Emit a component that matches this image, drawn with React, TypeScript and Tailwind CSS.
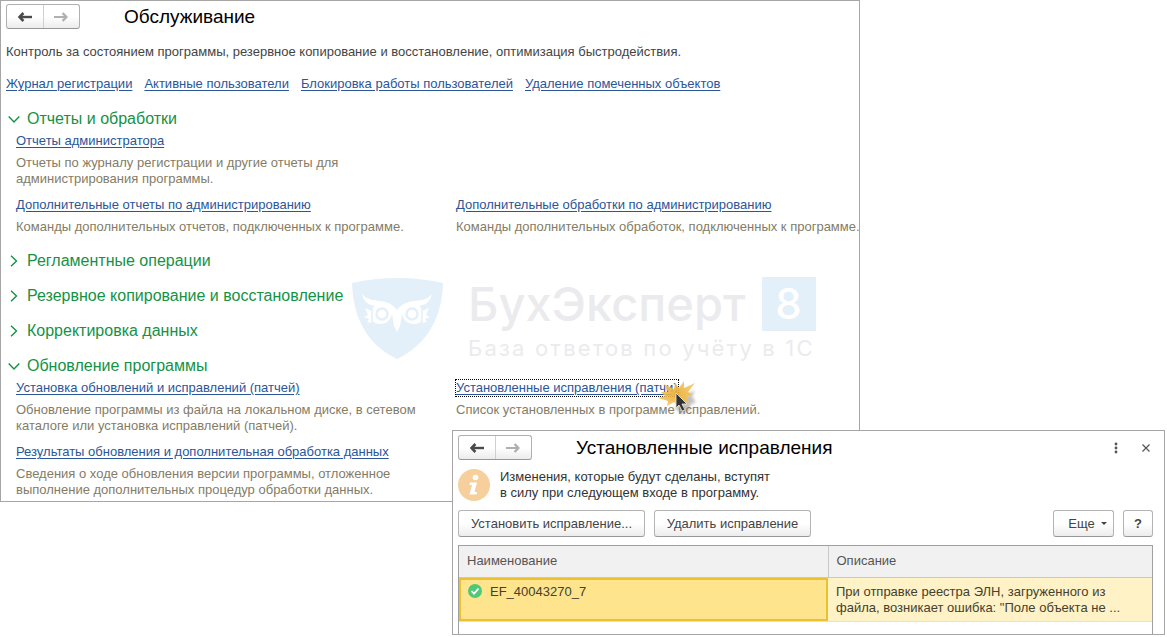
import { ReactNode, useState } from "react";

interface LinkItem {
  title: string;
  text: string;
  focused?: boolean;
}

interface Section {
  title: string;
  items: (LinkItem | null)[];
}

const topLinks = [
  "Журнал регистрации",
  "Активные пользователи",
  "Блокировка работы пользователей",
  "Удаление помеченных объектов",
];

// null - пустая ячейка сетки
const sections: Section[] = [
  {
    title: "Отчеты и обработки",
    items: [
      {
        title: "Отчеты администратора",
        text: "Отчеты по журналу регистрации и другие отчеты для\nадминистрирования программы.",
      },
      null,
      {
        title: "Дополнительные отчеты по администрированию",
        text: "Команды дополнительных отчетов, подключенных к программе.",
      },
      {
        title: "Дополнительные обработки по администрированию",
        text: "Команды дополнительных обработок, подключенных к программе.",
      },
    ],
  },
  { title: "Регламентные операции", items: [] },
  { title: "Резервное копирование и восстановление", items: [] },
  { title: "Корректировка данных", items: [] },
  {
    title: "Обновление программы",
    items: [
      {
        title: "Установка обновлений и исправлений (патчей)",
        text: "Обновление программы из файла на локальном диске, в сетевом\nкаталоге или установка исправлений (патчей).",
      },
      {
        title: "Установленные исправления (патчи)",
        text: "Список установленных в программе исправлений.",
        focused: true,
      },
      {
        title: "Результаты обновления и дополнительная обработка данных",
        text: "Сведения о ходе обновления версии программы, отложенное\nвыполнение дополнительных процедур обработки данных.",
      },
    ],
  },
];

function NavButtons() {
  return (
    <div className="flex h-[25px] w-[74px] shrink-0 rounded-[3px] border border-[#b0b0b0] border-b-[#989898] bg-linear-to-b from-white from-50% to-[#ececec]">
      <button
        type="button"
        aria-label="Назад"
        className="flex flex-1 items-center justify-center border-r border-[#d0d0d0]"
      >
        <svg width="14" height="10" viewBox="0 0 14 10" fill="none" stroke="#4a4a4a">
          <path d="M2 5h12" strokeWidth="2.4" />
          <path d="M5.4 1 1.6 5l3.800 4" strokeWidth="2.6" />
        </svg>
      </button>
      <button
        type="button"
        aria-label="Вперед"
        className="flex flex-1 items-center justify-center"
      >
        <svg width="14" height="10" viewBox="0 0 14 10" fill="none" stroke="#b0b0b0">
          <path d="M0 5h12" strokeWidth="2" />
          <path d="m8.6 1 3.800 4-3.800 4" strokeWidth="2.4" />
        </svg>
      </button>
    </div>
  );
}

function PushButton({
  children,
  className,
}: {
  children: ReactNode;
  className: string;
}) {
  return (
    <button
      type="button"
      className={`flex h-[27px] items-center justify-center rounded-[3px] border border-[#b4b4b4] border-b-[#989898] bg-linear-to-b from-white from-50% to-[#ececec] text-[#444] ${className}`}
    >
      {children}
    </button>
  );
}

function ClickMark() {
  return (
    <svg
      className="pointer-events-none absolute -top-[2px] -right-7 z-10"
      width="52"
      height="44"
      viewBox="0 0 52 44"
    >
      <defs>
        <radialGradient id="burst" cx="50%" cy="50%" r="50%">
          <stop offset="0" stopColor="#e9a92c" />
          <stop offset="1" stopColor="#f3c766" />
        </radialGradient>
        <filter id="soft" x="-30%" y="-30%" width="160%" height="160%">
          <feGaussianBlur stdDeviation="1.6" />
        </filter>
      </defs>
      <path
        d="M20 30 36 15l5-3-3 7 4 5-6 3 0 5-7 4Z"
        fill="#777"
        opacity="0.45"
        filter="url(#soft)"
      />
      <path
        d="M10 6l10 5 1-6 4 5 5-7 0 7 11-5-7 9 5 2-6 3 2 6-7-2-3 6-5-5-7 4 1-5-10-3 7-2-4-4 7 0Z"
        fill="url(#burst)"
        opacity="0.9"
      />
      <path
        d="M22 15v15l3-3 3 6 3-1-3-6h5Z"
        fill="#2e3338"
        stroke="#f6ecd4"
        strokeWidth="0.8"
      />
    </svg>
  );
}

function Watermark() {
  return (
    <div
      aria-hidden="true"
      className="pointer-events-none absolute top-[276px] left-[349px] flex font-[Inter,'Open_Sans',sans-serif] text-[#ebebee]"
    >
      <svg width="94" height="84" viewBox="0 0 94 84" className="shrink-0">
        <path
          d="M2 6Q47-4 93 6C92 42 76 68 47 82 18 68 3 42 2 6Z"
          fill="#e3f0f9"
        />
        <g fill="#fff">
          <path d="M12 17c5 6 11 6 18 7 9 1 13 4 17 9 4-5 8-8 17-9 7-1 13-1 18-7-2 8-6 11-13 12 3 2 5 5 5 8 0 6-4 10-10 10-7 0-11-5-12-10l-2 12-3 6-3-6-2-12c-1 5-5 10-12 10-6 0-10-4-10-10 0-3 2-6 5-8-7-1-11-4-13-12Z" />
          <path d="M15 31l7 3v12l-5-1 2-3-5-2 4-2Z" />
          <path d="M79 31l-7 3v12l5-1-2-3 5-2-4-2Z" />
        </g>
        <g fill="none" stroke="#e3f0f9" strokeWidth="2.400">
          <circle cx="32" cy="37" r="5.500" />
          <circle cx="62" cy="37" r="5.500" />
          <path d="M22 46V29M72 46V29" strokeWidth="1.500" />
        </g>
      </svg>
      <div className="ml-6">
        <div className="flex items-center gap-4">
          <span className="text-[47px] leading-[54px] font-medium">БухЭксперт</span>
          <span className="flex h-[54px] w-[54px] items-center justify-center bg-[#e3f0f9] text-[42px] leading-none font-medium text-white">
            8
          </span>
        </div>
        <div className="mt-[5px] text-[22px] leading-6 tracking-widest">
          База ответов по учёту в 1С
        </div>
      </div>
    </div>
  );
}

function SectionBlock({ section }: { section: Section }) {
  const [isOpen, setIsOpen] = useState(section.items.length > 0);

  return (
    <section>
      <button
        type="button"
        aria-expanded={isOpen}
        onClick={() => setIsOpen(!isOpen)}
        className="flex h-5 items-center gap-[7px] text-[16px] leading-5 text-[#149245]"
      >
        <svg width="12" height="12" viewBox="0 0 12 12" fill="none" stroke="#149245" strokeWidth="1.4">
          {isOpen ? <path d="m0.700 3.500 5.300 5.500 5.300-5.500" /> : <path d="m3 0.700 5.500 5.300-5.500 5.300" />}
        </svg>
        {section.title}
      </button>

      {isOpen && section.items.length > 0 && (
        <div className="mt-1 grid grid-cols-[440px_1fr] gap-y-[10px] pb-px pl-2">
          {section.items.map((item, index) =>
            item ? (
              <div key={item.title} className="whitespace-pre">
                <div className="relative w-fit">
                  <a
                    href="#"
                    className={`block text-[#2a5699] underline underline-offset-2 ${
                      item.focused ? "outline-1 outline-dotted outline-black" : ""
                    }`}
                  >
                    {item.title}
                  </a>
                  {item.focused && <ClickMark />}
                </div>
                <p className="mt-[6px] text-[#847c66]">{item.text}</p>
              </div>
            ) : (
              <div key={index} />
            ),
          )}
        </div>
      )}
    </section>
  );
}

function MaintenanceWindow() {
  return (
    <main className="relative w-[73.7%] border border-[#a6a6a6] bg-white pb-[2px]">
      <Watermark />
      <div className="relative px-[5px] pt-[3px]">
        <header className="flex items-center gap-11">
          <NavButtons />
          <h1 className="text-[19px] leading-6 text-black">Обслуживание</h1>
        </header>
        <p className="mt-[15px] text-[#444]">
          Контроль за состоянием программы, резервное копирование и
          восстановление, оптимизация быстродействия.
        </p>
        <nav className="mt-4 flex gap-3">
          {topLinks.map((link) => (
            <a key={link} href="#" className="text-[#2a5699] underline underline-offset-2">
              {link}
            </a>
          ))}
        </nav>
        <div className="mt-[17px] flex flex-col gap-[15px] pl-[2px]">
          {sections.map((section) => (
            <SectionBlock key={section.title} section={section} />
          ))}
        </div>
      </div>
    </main>
  );
}

function PatchesWindow() {
  return (
    <section className="absolute top-[430px] right-[2px] left-[452px] border border-[#a6a6a6] bg-white px-[5px] pt-1">
      <header className="flex items-center gap-11">
        <NavButtons />
        <h2 className="flex-1 text-[19px] leading-6 text-black">
          Установленные исправления
        </h2>
        <div className="flex items-center gap-[14px] pr-[5px]">
          <button type="button" aria-label="Меню" className="flex h-4 w-4 items-center justify-center">
            <svg width="4" height="12" viewBox="0 0 4 12" fill="#555">
              <circle cx="2" cy="2" r="1.400" />
              <circle cx="2" cy="6" r="1.400" />
              <circle cx="2" cy="10" r="1.400" />
            </svg>
          </button>
          <button type="button" aria-label="Закрыть" className="flex h-4 w-4 items-center justify-center">
            <svg width="8" height="8" viewBox="0 0 8 8" stroke="#555" strokeWidth="1.200">
              <path d="m0.500 0.500 7 7M7.500 0.500l-7 7" />
            </svg>
          </button>
        </div>
      </header>

      <div className="mt-[9px] flex items-center gap-[10px]">
        <svg width="32" height="32" viewBox="0 0 32 32" className="shrink-0">
          <circle cx="16" cy="16" r="16" fill="#f6cf9c" />
          <circle cx="17.500" cy="8.500" r="2.800" fill="#fff" />
          <path d="M12 13.500h7l-2.500 9.500h2.500l-.5 2.500h-7l2.500-9.500h-2.500Z" fill="#fff" />
        </svg>
        <p className="whitespace-pre text-[#333]">
          {"Изменения, которые будут сделаны, вступят\nв силу при следующем входе в программу."}
        </p>
      </div>

      <div className="mt-[9px] flex items-center gap-[9px] pr-[6px]">
        <PushButton className="w-[187px]">Установить исправление...</PushButton>
        <PushButton className="w-[157px]">Удалить исправление</PushButton>
        <PushButton className="ml-auto w-[61px] gap-[6px] pl-2">
          Еще
          <svg width="6" height="3" viewBox="0 0 6 3" fill="#444">
            <path d="M0 0h6L3 3Z" />
          </svg>
        </PushButton>
        <PushButton className="w-[30px] font-bold">?</PushButton>
      </div>

      <div className="mt-2 mr-[6px] border border-b-0 border-[#a0a0a0] pb-3">
        <table className="w-full table-fixed border-collapse text-left">
          <colgroup>
            <col className="w-[369px]" />
            <col />
          </colgroup>
          <thead>
            <tr className="h-[31px] border-b border-[#c8c8c8] bg-[#f1f1f1] text-[#555]">
              <th className="border-r border-[#c8c8c8] px-2 font-normal">Наименование</th>
              <th className="px-2 font-normal">Описание</th>
            </tr>
          </thead>
          <tbody>
            <tr className="h-11 border-b border-[#e0e0e0] align-top text-[#46402c]">
              <td className="p-0">
                <div className="flex h-[43px] gap-2 border-2 border-[#ebc12f] bg-[#fde48d] px-[7px] pt-1">
                  <svg width="14" height="14" viewBox="0 0 14 14">
                    <circle cx="7" cy="7" r="7" fill="#4fc878" />
                    <path d="m3.500 7 2.500 2.600 4.500-5" fill="none" stroke="#fff" strokeWidth="1.800" />
                  </svg>
                  EF_40043270_7
                </div>
              </td>
              <td className="bg-[#fef2c6] px-2 pt-[6px] whitespace-pre">
                {'При отправке реестра ЭЛН, загруженного из\nфайла, возникает ошибка: "Поле объекта не ...'}
              </td>
            </tr>
          </tbody>
        </table>
      </div>
    </section>
  );
}

export default function App() {
  return (
    <div className="relative min-h-screen bg-white font-['Liberation_Sans',Arial,sans-serif] text-[13px] leading-4">
      <MaintenanceWindow />
      <PatchesWindow />
    </div>
  );
}
